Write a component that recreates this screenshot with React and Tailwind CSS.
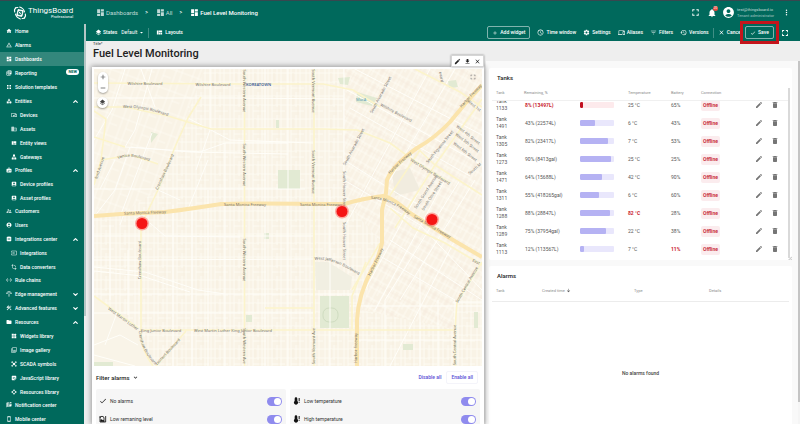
import { useLayoutEffect, useRef } from "react";
import { ChevronDown, ChevronUp } from "lucide-react";
import {
  MdHome, MdWarningAmber, MdDashboard, MdCategory, MdDevicesOther, MdDomain, MdViewQuilt, MdLan,
  MdBadge, MdAccountBox, MdSupervisorAccount, MdAccountCircle, MdIntegrationInstructions, MdInput,
  MdTransform, MdSettingsEthernet, MdSettingsInputAntenna, MdConstruction, MdFolder, MdWidgets, MdFilter,
  MdStickyNote2, MdApi, MdMarkUnreadChatAlt, MdSmartphone, MdExpandMore, MdFullscreen,
  MdNotifications, MdMoreVert, MdAdd, MdSchedule, MdSettings, MdDevices, MdFilterList, MdHistory,
  MdClose, MdCheck, MdArrowDropDown, MdLayers, MdEdit, MdDelete, MdDownload, MdArrowDownward,
  MdRemove, MdApps, MdLibraryBooks,
} from "react-icons/md";

function ScadaIcon({ className }) {
  return (
    <svg viewBox="0 0 24 24" className={className} fill="none" stroke="currentColor" strokeWidth="2.5">
      <path d="M3 8 V3 H8 M16 3 H21 V8 M21 16 V21 H16 M8 21 H3 V16 M4 4 L20 20 M20 4 L4 20" />
      <circle cx="12" cy="12" r="4" fill="currentColor" />
    </svg>
  );
}

function TankLevelIcon({ className }) {
  return (
    <svg viewBox="0 0 24 24" className={className} fill="none" stroke="currentColor" strokeWidth="2.5">
      <path d="M3 3 V21 H15 V9 Q15 4 9 4 Q3 4 3 9 M20 3 V21 H15" />
      <path d="M4 14 Q7 11 10 14 T15 14 V20 H4 Z" fill="currentColor" stroke="none" />
    </svg>
  );
}

function ThermometerIcon({ className }) {
  return (
    <svg viewBox="0 0 24 24" className={className} fill="currentColor">
      <path d="M5 5 a4 4 0 0 1 8 0 V12 a6 6 0 1 1 -8 0 Z" />
      <path d="M17 3 H20 V12 H17 Z M17 14 H20 V17 H17 Z" />
    </svg>
  );
}

const MENU = [
  { label: "Home", icon: MdHome },
  { label: "Alarms", icon: MdWarningAmber },
  { label: "Dashboards", icon: MdDashboard, active: true },
  { label: "Reporting", icon: MdLibraryBooks, badge: "NEW" },
  { label: "Solution templates", icon: MdApps },
  {
    label: "Entities", icon: MdCategory, open: true,
    items: [
      { label: "Devices", icon: MdDevicesOther },
      { label: "Assets", icon: MdDomain },
      { label: "Entity views", icon: MdViewQuilt },
      { label: "Gateways", icon: MdLan },
    ],
  },
  {
    label: "Profiles", icon: MdBadge, open: true,
    items: [
      { label: "Device profiles", icon: MdAccountBox },
      { label: "Asset profiles", icon: MdAccountBox },
    ],
  },
  { label: "Customers", icon: MdSupervisorAccount },
  { label: "Users", icon: MdAccountCircle },
  {
    label: "Integrations center", icon: MdIntegrationInstructions, open: true,
    items: [
      { label: "Integrations", icon: MdInput },
      { label: "Data converters", icon: MdTransform },
    ],
  },
  { label: "Rule chains", icon: MdSettingsEthernet },
  { label: "Edge management", icon: MdSettingsInputAntenna, open: false },
  { label: "Advanced features", icon: MdConstruction, open: false },
  {
    label: "Resources", icon: MdFolder, open: true,
    items: [
      { label: "Widgets library", icon: MdWidgets },
      { label: "Image gallery", icon: MdFilter },
      { label: "SCADA symbols", icon: ScadaIcon },
      { label: "JavaScript library", icon: MdStickyNote2 },
      { label: "Resources library", icon: MdApi },
    ],
  },
  { label: "Notification center", icon: MdMarkUnreadChatAlt },
  { label: "Mobile center", icon: MdSmartphone },
];

const TANKS = [
  { id: 1133, level: 8, amount: "13497L", temp: 25, battery: 65 },
  { id: 1491, level: 43, amount: "22574L", temp: 6, battery: 43 },
  { id: 1305, level: 82, amount: "23417L", temp: 7, battery: 53 },
  { id: 1273, level: 90, amount: "8413gal", temp: 25, battery: 25 },
  { id: 1471, level: 64, amount: "15688L", temp: 42, battery: 90 },
  { id: 1311, level: 55, amount: "418265gal", temp: 6, battery: 60 },
  { id: 1288, level: 88, amount: "28847L", temp: 82, battery: 28 },
  { id: 1289, level: 75, amount: "37954gal", temp: 22, battery: 38 },
  { id: 1113, level: 12, amount: "113567L", temp: 7, battery: 11 },
];

function Logo() {
  return (
    <div className="flex h-[23px] shrink-0 items-center gap-px pl-[13px] pt-px">
      <svg viewBox="0 0 40 40" className="size-[14px]" fill="none" stroke="white" strokeWidth="3">
        <path d="M5 17 Q2 9 9 5 M14 4 L7 5 L5 11 M35 23 Q38 31 31 35 M26 36 L33 35 L35 29" strokeLinecap="round" />
        <path d="M7 23 Q10 33 21 37 M19 3 Q30 6 33 17" strokeLinecap="round" />
        <rect x="11" y="10" width="18" height="20" rx="4" transform="rotate(14 20 20)" fill="white" stroke="none" />
        <circle cx="20" cy="20" r="5" stroke="#00695c" strokeWidth="2.5" />
        <path d="M16 25 L25 15" stroke="#00695c" strokeWidth="2.500" />
      </svg>
      <div className="flex flex-col items-end">
        <span className="text-[8px] leading-[8px]">ThingsBoard</span>
        <span className="text-[4px] leading-[4px]">Professional</span>
      </div>
    </div>
  );
}

function MenuItem({ item, nested }) {
  const Icon = item.icon;
  const Chevron = item.open ? ChevronUp : ChevronDown;
  return (
    <li>
      <a
        href="#"
        className={`flex h-[14px] items-center gap-[3px] pr-[5px] ${nested ? "pl-[11px]" : "pl-[6px]"} ${item.active ? "bg-white/20" : ""}`}
      >
        <Icon className="size-[6px] shrink-0" />
        <span className="whitespace-nowrap">{item.label}</span>
        {item.badge && (
          <span className="mb-[3px] ml-auto rounded-full bg-white px-[2px] text-[4px] leading-[6px] font-bold text-[#00695c]">
            {item.badge}
          </span>
        )}
        {item.open !== undefined && <Chevron className="ml-auto size-[7px] shrink-0" strokeWidth={4} />}
      </a>
      {item.items && (
        <ul className="-mb-px">
          {item.items.map((sub) => <MenuItem key={sub.label} item={sub} nested />)}
        </ul>
      )}
    </li>
  );
}

function Sidebar() {
  return (
    <aside className="flex w-[86px] shrink-0 flex-col">
      <Logo />
      <div className="flex min-h-0 flex-1">
        <nav className="min-w-0 flex-1 overflow-hidden font-medium">
          <ul>{MENU.map((item) => <MenuItem key={item.label} item={item} />)}</ul>
        </nav>
        <div className="w-[2px] bg-[#eeeeee]">
          <div className="h-[73%] bg-[#b5c6c5]" />
        </div>
      </div>
    </aside>
  );
}

function TopBar() {
  return (
    <header className="flex h-[23px] shrink-0 items-center pr-[9px] pl-[10px]">
      <nav aria-label="Breadcrumb" className="flex items-center gap-[7px] text-[6px]">
        <a href="#" className="flex items-center gap-px text-white/75"><MdDashboard className="size-[9px]" />Dashboards</a>
        <span className="text-[5px] font-medium">&gt;</span>
        <a href="#" className="ml-px flex items-center gap-px text-white/75"><MdDashboard className="size-[9px]" />All</a>
        <span className="text-[5px] font-medium">&gt;</span>
        <a href="#" className="ml-px flex items-center gap-px font-medium"><MdDashboard className="size-[9px]" />Fuel Level Monitoring</a>
      </nav>
      <div className="ml-auto flex items-center">
        <button aria-label="Fullscreen"><MdFullscreen className="size-[11px]" /></button>
        <button aria-label="Notifications" className="relative ml-[6px]">
          <MdNotifications className="size-[10px]" />
          <span className="absolute -top-[2px] -right-px size-[5px] rounded-full bg-[#e5483d] text-center text-[3px] leading-[5px]">20</span>
        </button>
        <MdAccountCircle className="ml-[5px] size-[13px]" />
        <div className="ml-[2px] min-w-[41px] text-[4px] leading-[6px] text-white/75">
          <div>test@thingsboard.io</div>
          <div className="text-white/60">Tenant administrator</div>
        </div>
        <button aria-label="More" className="ml-1"><MdMoreVert className="size-[9px]" /></button>
      </div>
    </header>
  );
}

function ToolButton({ icon: Icon, children }) {
  return (
    <button className="flex items-center gap-[2px] whitespace-nowrap"><Icon className="size-[7px]" />{children}</button>
  );
}

function Toolbar() {
  return (
    <div className="flex h-[17px] shrink-0 items-center pr-[10px] pl-[9px] font-medium">
      <div className="flex items-center">
        <MdLayers className="size-[7px]" />
        <label htmlFor="state" className="ml-px">States</label>
        <div className="ml-1 flex items-center">
          <select id="state" className="w-[17px] appearance-none bg-transparent p-0 font-normal">
            <option>Default</option>
          </select>
          <MdArrowDropDown className="size-[7px]" />
        </div>
        <span className="mr-[7px] ml-[3px] h-[10px] w-px bg-white/25" />
        <ToolButton icon={MdViewQuilt}>Layouts</ToolButton>
      </div>
      <div className="ml-auto flex items-center gap-[7px]">
        <button className="flex h-[13px] items-center gap-[2px] rounded-[2px] border border-white/50 px-1 whitespace-nowrap">
          <MdAdd className="size-[6px]" />Add widget
        </button>
        <ToolButton icon={MdSchedule}>Time window</ToolButton>
        <ToolButton icon={MdSettings}>Settings</ToolButton>
        <ToolButton icon={MdDevices}>Aliases</ToolButton>
        <ToolButton icon={MdFilterList}>Filters</ToolButton>
        <ToolButton icon={MdHistory}>Versions</ToolButton>
        <span className="-mx-[3px] h-[10px] w-px bg-white/25" />
        <ToolButton icon={MdClose}>Cancel</ToolButton>
        <div className="relative -ml-[4px]">
          <button className="flex h-[13px] w-[29px] items-center justify-center gap-[2px] rounded-[2px] border border-white/50">
            <MdCheck className="size-[6px]" />Save
          </button>
          <div className="pointer-events-none absolute -inset-[5px] z-10 border-[3px] border-[#c4151c]" />
        </div>
        <button aria-label="Expand" className="-ml-px"><MdFullscreen className="size-[10px]" /></button>
      </div>
    </div>
  );
}

const WHITE_ROADS = [
  "M94 137 L125 147 L200 152 L225 143 L288 143", "M131 147 L190 152 L288 154", "M94 189 H305", "M94 236 H313 M125 211 L120 225",
  "M94 260 H140 L313 259", "M94 294 H362", "M94 267 L145 272 L198 290 L225 294", "M94 271 L142 276 L190 292",
  "M94 313 H313", "M125 69 L112 110 L94 140", "M152 69 L135 130 L125 147", "M188 118 L230 140 L313 143",
  "M210 69 V130 L196 170", "M225 143 V189 V366", "M192 205 V366", "M173 205 V366", "M208 190 V366", "M265 69 V366", "M288 69 V366",
  "M330 190 V366", "M128 250 V315", "M110 225 V300", "M150 223 L165 236 L240 237", "M141 69 L155 107", "M94 98 H230 L344 99",
  "M344 69 V180 L420 225 L482 290", "M347 90 L482 165", "M350 108 L470 176", "M344 160 L400 195 L420 205", "M355 69 L482 135",
  "M430 69 L344 228", "M455 69 L390 180", "M400 300 L475 180", "M385 300 L460 180", "M390 240 L482 300", "M380 256 L455 300 L455 329",
  "M425 180 L365 290", "M445 180 L375 310", "M385 300 V366 M420 270 V366 M438 300 V366", "M357 340 H482", "M350 306 H482", "M453 302 H482",
  "M390 366 L455 240", "M94 345 L120 335 L138 345 M94 355 L135 366 M118 310 L105 345", "M94 217 L115 190 L130 147",
  "M121 214 L152 133 M188 209 L208 160", "M100 189 L115 160 M158 190 L180 200",
];
const YELLOW_ROADS = [
  "M94 83 L241 84 H323 L353 90 L380 107", "M94 107 H125 L168 116 L211 129 H323 L357 130 L390 143 L413 160 L450 183",
  "M101 160 L131 155 L158 164", "M201 97 L188 118 L175 147 L158 190 L141 225 V332 Q140 348 153 366",
  "M244.500 69 V366", "M314 69 V366", "M140 330 H453", "M94 296 L138 328", "M156 366 L186 331",
  "M482 262 L457 302 L455 329 V366", "M390 208 L413 228 L445 243 L482 265", "M94 137 L125 147", "M94 111 L106 119 L101 160 L94 185",
  "M383 206 L420 150", "M395 228 L435 165 L482 99", "M366 262 L352 296 V329", "M415 69 L460 92 L482 107", "M380 243 L352 290",
  "M417 148 L435 165 L482 195", "M265 308 H313",
];
const PARKS = [
  "M320 296 H349 V328 H320 Z", "M278 170 H300 V189 H278 Z", "M357 92 L377 98 L372 106 L356 102 Z", "M338 78 L350 77 L348 85 L340 84 Z",
  "M448 81 L456 80 L458 87 L449 88 Z", "M151 132 L158 134 L151 143 Z", "M94 362 H113 V366 H94 Z", "M403 344 H413 V350 H403 Z",
  "M474 312 H478 V328 H474 Z", "M246 315 H252 V322 H246 Z", "M276 120 H279 V128 H276 Z", "M264 233 H269 V239 H264 Z",
];
const FREEWAYS = [
  "M94 216 L121 214 L165 212 Q190 209 221 204 Q240 203 345 204 Q360 199 383 196 Q392 197 410 213 L453 240 L482 257",
  "M482 85 Q465 103 450 122 Q435 138 417 148 Q393 165 387 180 L386 193 L382 210 V243 Q378 260 373 267 Q358 295 357 320 V366",
];
const LABELS = [
  [145, 84, 0, "Wilshire Boulevard"], [213, 85, 0, "Wilshire Boulevard"], [165, 172, -65, "Crenshaw Boulevard"],
  [244, 91, 90, "South Western Avenue"], [244, 165, 90, "South Western Avenue"], [244, 260, 90, "South Western Avenue"], [244, 346, 90, "South Western Ave"],
  [313, 91, 90, "South Vermont Avenue"], [313, 172, 90, "South Vermont Avenue"], [314, 346, -90, "South Vermont Ave"],
  [381, 95, -62, "South Alvarado Street"], [354, 147, -62, "South Alvarado Street"], [396, 113, 28, "Wilshire Boulevard"],
  [400, 163, -43, "Harbor Freeway"], [471, 96, -47, "Harbor Freeway"], [440, 147, -51, "South Figueroa Street"],
  [430, 172, 32, "West Olympic Boulevard"], [426, 192, -57, "South Grand Avenue"], [432, 196, -57, "South Olive Street"],
  [468, 135, 38, "West 4th Street"], [467, 143, 38, "West 5th Street"], [465, 152, 38, "West 6th Street"], [474, 106, 38, "West 1st"],
  [145, 213, -2, "Santa Monica Freeway"], [245, 205, 0, "Santa Monica Freeway"], [321, 205, 0, "Santa Monica Freeway"], [432, 227, 30, "Santa Monica Freeway"],
  [344, 190, 90, "South Hoover Street"], [344, 241, 90, "South Hoover Street"], [376, 262, -64, "Harbor Freeway"], [356, 348, -90, "Harbor Freeway"],
  [467, 285, -60, "South Central Avenue"], [455, 345, -90, "South Central Avenue"], [140, 260, -90, "Crenshaw Boulevard"],
  [123, 319, 36, "West Martin Luther"], [161, 331, 0, "King Junior Boulevard"], [233, 331, 0, "West Martin Luther King Junior Boulevard"],
  [168, 352, -47, "Leimert Boulevard"], [100, 168, -72, "ford Avenue"], [476, 262, 30, "East"], [441, 77, 80, "evard"], [475, 169, -40, "South M"],
];
const CURVED = [
  ["olympic", "M123 108 Q146 107 170 117", "West Olympic Boulevard"],
  ["venice", "M118 159 Q133 153 153 163", "Venice Boulevard"],
  ["monica", "M371 199 Q391 199 414 219", "Santa Monica Freeway"],
  ["jefferson", "M315 260 Q332 257 363 278", "West Jefferson Boulevard"],
  ["crenshaw", "M139 331 Q139 348 156 366", "Crenshaw Boulevard"],
];
const PINS = [[142, 223], [342, 211], [432, 219]];

function CityMap() {
  return (
    <svg viewBox="94 69 388 297" preserveAspectRatio="xMidYMid slice" className="block size-full" role="img" aria-label="Tank locations">
      <defs>
        <pattern id="blocks" width="19" height="23" patternUnits="userSpaceOnUse">
          <path d="M2 0 V23 M6 0 V23 M11 0 V15 M15 0 V23 M0 4 H19 M0 13 H19 M6 19 H19" stroke="#fffdf6" strokeWidth="0.700" />
          <path d="M8 4 V13 M13 13 V23" stroke="#f2eadb" strokeWidth="0.500" />
        </pattern>
        <pattern id="downtown" width="14" height="19" patternUnits="userSpaceOnUse" patternTransform="rotate(29)">
          <path d="M2 0 V19 M8 0 V19 M11 5 V19 M0 5 H14 M0 14 H14" stroke="#fffdf6" strokeWidth="0.700" />
          <path d="M5 5 V14 M0 9 H14" stroke="#f2e8da" strokeWidth="0.500" />
        </pattern>
        <pattern id="westside" width="17" height="21" patternUnits="userSpaceOnUse" patternTransform="rotate(20)">
          <path d="M3 0 V21 M9 0 V21 M0 6 H17 M9 15 H17" stroke="#fffdf6" strokeWidth="0.600" />
        </pattern>
      </defs>
      <rect x="94" y="69" width="388" height="297" fill="#f9f3e6" />
      <rect x="94" y="69" width="388" height="297" fill="url(#blocks)" />
      <path d="M94 69 H205 L158 190 L121 214 H94 Z" fill="#f9f3e6" />
      <path d="M94 69 H205 L158 190 L121 214 H94 Z" fill="url(#westside)" />
      <path d="M94 297 L138 328 L153 366 H94 Z" fill="#f9f4e8" />
      <path d="M344 69 H482 V300 H453 V329 L362 310 L382 243 L344 200 Z" fill="#f9f2e5" />
      <path d="M344 69 H482 V300 H453 V329 L362 310 L382 243 L344 200 Z" fill="url(#downtown)" />
      <path d="M315 262 L328 262 L352 277 L350 290 H316 Z" fill="#f1efe2" />
      <path d="M392 172 L410 168 L420 190 L395 196 Z" fill="#f1ecdf" />
      {PARKS.map((d) => <path key={d} d={d} fill="#e2ead3" />)}
      <rect x="323" y="308" width="15" height="14" rx="6" fill="none" stroke="#cfdcc0" />
      <g fill="none" strokeLinejoin="round">
        {WHITE_ROADS.map((d) => <path key={d} d={d} stroke="#fffef9" strokeWidth="1" />)}
        {YELLOW_ROADS.map((d) => <path key={d} d={d} stroke="#fcf4cb" strokeWidth="1.600" />)}
        {FREEWAYS.map((d) => <path key={d} d={d} stroke="#fbe4ac" strokeWidth="4" />)}
      </g>
      <g fontSize="4" fill="#77746e" textAnchor="middle" fontFamily="Noto Sans, sans-serif">
        {LABELS.map(([x, y, angle, text], i) => (
          <text key={i} x={x} y={y} dy="1" transform={`rotate(${angle} ${x} ${y})`}>{text}</text>
        ))}
      </g>
      <g fontSize="4" fill="#77746e" fontFamily="Noto Sans, sans-serif">
        {CURVED.map(([id, d, text]) => (
          <g key={id}>
            <path id={id} d={d} fill="none" />
            <text><textPath href={`#${id}`}>{text}</textPath></text>
          </g>
        ))}
        <text x="246" y="86" fill="#3d5f9f" fontWeight="600">KOREATOWN</text>
        <text x="356" y="101" fill="#5aa0b4">MacA</text>
      </g>
      {PINS.map(([x, y]) => (
        <g key={x}>
          <circle cx={x} cy={y + 0.5} r="7" fill="#ff5a55" opacity="0.500" />
          <circle cx={x} cy={y + 0.5} r="5.500" fill="#f51515" />
        </g>
      ))}
    </svg>
  );
}

function AlarmToggle({ icon: Icon, label }) {
  return (
    <label className="flex h-[18px] items-center gap-[3px] pr-1 pl-[3px] text-[#333]">
      <Icon className="size-2 text-[#111]" />
      <span>{label}</span>
      <input
        type="checkbox"
        role="switch"
        defaultChecked
        className="relative ml-auto h-[9px] w-[15px] appearance-none rounded-full bg-[#8f8bee] after:absolute after:top-px after:right-px after:size-[7px] after:rounded-full after:bg-white"
      />
    </label>
  );
}

function MapCard() {
  return (
    <section className="relative flex min-h-0 flex-1 flex-col bg-white p-[2px] shadow-[0_0_5px_1px_rgba(0,0,0,0.35)]">
      <div className="absolute -top-[12px] right-0 flex h-[12px] items-center gap-[3px] border border-[#d5d5d5] bg-white px-[2px] text-[#222] shadow-[0_0_2px_rgba(0,0,0,0.4)]">
        <button aria-label="Edit widget"><MdEdit className="size-[7px]" /></button>
        <button aria-label="Download widget"><MdDownload className="size-[7px]" /></button>
        <button aria-label="Remove widget"><MdClose className="size-[7px]" /></button>
      </div>
      <div className="relative h-[297px] shrink-0 overflow-hidden">
        <CityMap />
        <div className="absolute top-[3px] left-[3px] flex flex-col items-center gap-1 text-[#444]">
          <div className="flex h-[21px] flex-col items-center justify-around rounded-full bg-white px-px shadow-[0_1px_2px_rgba(0,0,0,0.35)]">
            <button aria-label="Zoom in"><MdAdd className="size-2" /></button>
            <button aria-label="Zoom out"><MdRemove className="size-2" /></button>
          </div>
          <button aria-label="Layers" className="flex size-[11px] items-center justify-center rounded-full bg-white shadow-[0_1px_2px_rgba(0,0,0,0.35)]">
            <MdLayers className="size-[7px]" />
          </button>
        </div>
        <button aria-label="Map fullscreen" className="absolute top-[4px] right-[5px] text-[#777]"><MdFullscreen className="size-2" /></button>
      </div>
      <div className="flex h-[23px] shrink-0 items-center pr-1 pl-[2px]">
        <button className="flex items-center gap-[2px] text-[6px] font-medium text-[#222]">Filter alarms<MdExpandMore className="size-[7px]" /></button>
        <button className="ml-auto px-[5px] font-medium text-[#5b50d6]">Disable all</button>
        <button className="rounded-[2px] border border-[#f4f4fa] px-1 py-[2px] font-medium text-[#5b50d6]">Enable all</button>
      </div>
      <div className="grid grid-cols-2 gap-1 px-[2px]">
        <div className="rounded-t-[2px] bg-[#f6f6f6] pt-[3px]">
          <AlarmToggle icon={MdCheck} label="No alarms" />
          <AlarmToggle icon={TankLevelIcon} label="Low remaning level" />
        </div>
        <div className="rounded-t-[2px] bg-[#f6f6f6] pt-[3px]">
          <AlarmToggle icon={ThermometerIcon} label="Low temperature" />
          <AlarmToggle icon={ThermometerIcon} label="High temperature" />
        </div>
      </div>
    </section>
  );
}

function TankRow({ tank }) {
  const low = tank.level < 10;
  return (
    <tr className="h-[18px]">
      <td className="pl-1 leading-[7px]">Tank<br />{tank.id}</td>
      <td className={`pl-[5px] ${low ? "font-bold text-[#c9202c]" : ""}`}>{tank.level}% ({tank.amount})</td>
      <td className="pl-1">
        <div className={`h-[6px] w-[34px] overflow-hidden rounded-[1px] ${low ? "bg-[#fdeaec]" : "bg-[#e9e7fc]"}`}>
          <div className={`h-full rounded-[1px] ${low ? "bg-[#c21020]" : "bg-[#b5b2f3]"}`} style={{ width: `${tank.level}%` }} />
        </div>
      </td>
      <td className={`pl-1 ${tank.temp > 80 ? "font-bold text-[#c9202c]" : ""}`}>{tank.temp} °C</td>
      <td className={`pl-1 ${tank.battery < 20 ? "font-bold text-[#c9202c]" : ""}`}>{tank.battery}%</td>
      <td className="pl-1"><span className="inline-block rounded-[2px] bg-[#fbecee] px-[2px] leading-[11px] font-bold text-[#c9323e]">Offline</span></td>
      <td>
        <div className="flex justify-end gap-2 pr-[9px] text-[#757575]">
          <button aria-label={`Edit tank ${tank.id}`}><MdEdit className="size-2" /></button>
          <button aria-label={`Delete tank ${tank.id}`}><MdDelete className="size-2" /></button>
        </div>
      </td>
    </tr>
  );
}

function TanksCard() {
  const body = useRef(null);
  useLayoutEffect(() => {
    body.current.scrollTop = 5;
  }, []);
  return (
    <section className="relative h-[192px] shrink-0 rounded-[2px] bg-white">
      <h2 className="flex h-[15px] items-end pl-2 text-[6px] leading-[10px] font-medium text-[#222]">Tanks</h2>
      <div className="flex pt-px pr-[2px] pl-[3px]">
        <div ref={body} className="h-[174px] min-w-0 flex-1 overflow-y-auto [scrollbar-width:none]">
          <table className="w-full table-fixed border-separate border-spacing-0 text-left text-[#555]">
            <thead className="sticky top-0 z-10 bg-white text-[4px] text-[#8a8a8a]">
              <tr className="h-[17px]">
                <th className="w-[28px] border-b border-[#f0f0f0] pl-1 font-normal">Tank</th>
                <th className="w-[56px] border-b border-[#f0f0f0] pl-1 font-normal">Remaining, %</th>
                <th className="w-[48px] border-b border-[#f0f0f0]" aria-label="Level" />
                <th className="w-[43px] border-b border-[#f0f0f0] pl-1 font-normal">Temperature</th>
                <th className="w-[30px] border-b border-[#f0f0f0] pl-1 font-normal">Battery</th>
                <th className="w-[43px] border-b border-[#f0f0f0] pl-1 font-normal">Connection</th>
                <th className="border-b border-[#f0f0f0]" aria-label="Actions" />
              </tr>
            </thead>
            <tbody>{TANKS.map((tank) => <TankRow key={tank.id} tank={tank} />)}</tbody>
          </table>
        </div>
        <div className="mt-1 w-[2px] bg-[#d9d9d9]" />
      </div>
      <svg viewBox="0 0 6 6" className="absolute right-0 bottom-0 size-1" stroke="#999" fill="none"><path d="M6 1 L1 6 M6 4 L4 6" /></svg>
    </section>
  );
}

function AlarmsCard() {
  return (
    <section className="flex min-h-0 flex-1 flex-col rounded-t-[2px] bg-white px-[3px]">
      <h2 className="flex h-[15px] shrink-0 items-end pl-[5px] text-[6px] leading-[10px] font-medium text-[#222]">Alarms</h2>
      <table className="w-full table-fixed text-left text-[4px] text-[#8a8a8a]">
        <thead>
          <tr className="h-[20px] border-b border-[#ececec]">
            <th className="w-[46px] pl-1 font-normal">Tank</th>
            <th className="w-[92px] pl-1 font-normal">
              <span className="flex items-center gap-px">Created time<MdArrowDownward className="size-[5px] text-[#444]" /></span>
            </th>
            <th className="w-[75px] pl-1 font-normal">Type</th>
            <th className="pl-1 font-normal">Details</th>
          </tr>
        </thead>
      </table>
      <p className="flex min-h-0 flex-1 items-center justify-center pt-[22px] font-medium text-[#444]">No alarms found</p>
    </section>
  );
}

export default function App() {
  return (
    <div className="flex h-screen overflow-hidden border-t border-[#37474f] bg-[#00695c] font-[Roboto,sans-serif] text-[5px] leading-[7px] text-white">
      <Sidebar />
      <div className="flex min-w-0 flex-1 flex-col">
        <TopBar />
        <Toolbar />
        <main className="flex min-h-0 flex-1 flex-col bg-[#eeeeee]">
          <div className="flex flex-col px-[7px] text-[#222]">
            <label htmlFor="title" className="h-[6px] text-[4px] leading-[6px]">Title*</label>
            <input id="title" defaultValue="Fuel Level Monitoring" className="h-[14px] w-full bg-transparent p-0 text-[11px] leading-[14px] font-medium" />
          </div>
          <div className="flex min-h-0 flex-1">
            <div className="grid min-w-0 flex-1 grid-cols-[400fr_312fr]">
              <div className="flex min-h-0 min-w-0 flex-col pt-[6px] pr-[2px] pl-[6px]"><MapCard /></div>
              <div className="flex min-h-0 min-w-0 flex-col gap-[6px] bg-[#f9f9f9] pt-[7px] pr-[6px] pl-[3px]">
                <TanksCard />
                <AlarmsCard />
              </div>
            </div>
            <div className="w-[2px] bg-[#f5f5f5]"><div className="h-[94%] bg-[#c4c4c4]" /></div>
          </div>
        </main>
      </div>
    </div>
  );
}
